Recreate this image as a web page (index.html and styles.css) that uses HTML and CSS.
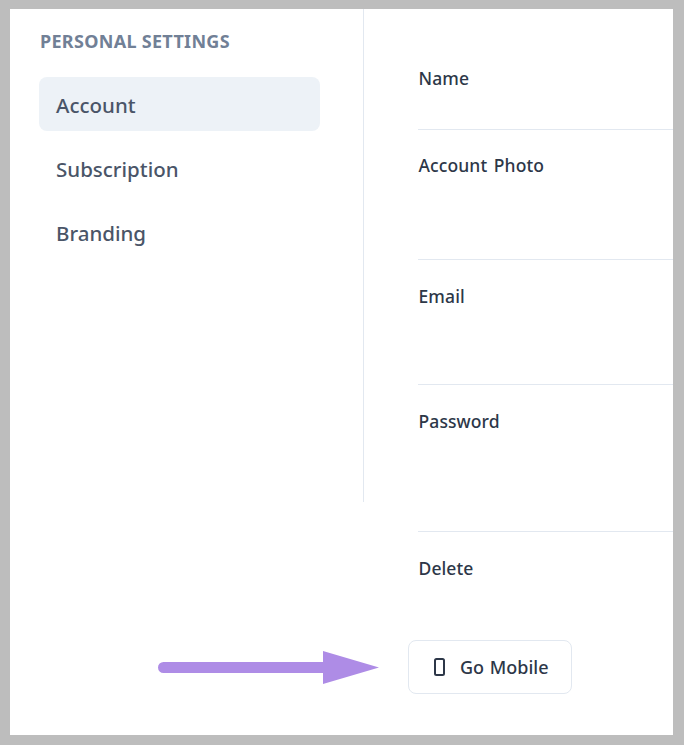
FILE: index.html
```html
<!DOCTYPE html>
<html lang="en">

<head>
    <meta charset="UTF-8"/>
    <meta content="width=device-width, initial-scale=1.0" name="viewport"/>
    <title>Personal settings</title>
    <link rel="stylesheet" href="styles.css">
</head>

<body>
    <div class="frame">
        <div class="settings">
            <!-- left menu -->
            <div class="sidebar">
                <h2 class="sidebar-title">PERSONAL SETTINGS</h2>
                <ul class="menu">
                    <li class="menu-item active">Account</li>
                    <li class="menu-item">Subscription</li>
                    <li class="menu-item">Branding</li>
                </ul>
            </div>
            <!-- form rows, the fields are cropped out of the shot -->
            <div class="rows">
                <div class="row row-name">Name</div>
                <div class="row row-photo">Account Photo</div>
                <div class="row row-email">Email</div>
                <div class="row row-password">Password</div>
                <div class="row row-delete">Delete</div>
            </div>
        </div>
        <div class="bottom">
            <svg class="arrow" width="221" height="33" viewBox="0 0 221 33">
                <path d="M5.500 11H165V0L221 16.500L165 33V22H5.500A5.500 5.500 0 0 1 5.500 11Z" fill="#ae8ce6"/>
            </svg>
            <button class="mobile-btn">
                <svg class="phone" width="11" height="18" viewBox="0 0 11 18">
                    <rect x="1" y="1" width="9" height="16" rx="1.500" fill="none" stroke="#2d3748" stroke-width="2"/>
                </svg>
                Go Mobile
            </button>
        </div>
    </div>
</body>

</html>
```

FILE: styles.css
```css
* {
    margin: 0;
    padding: 0;
    box-sizing: border-box;
}

ul {
    list-style: none;
}

body {
    background: #bdbdbd;
    padding: 9px 11px 10px 10px;
    font-family: "Noto Sans", "Open Sans", sans-serif;
}

.frame {
    width: 663px;
    height: 726px;
    background: #fff;
    overflow: hidden;
}

.settings {
    display: flex;
    align-items: flex-start;
    height: 622px;
}

.sidebar {
    width: 354px;
    height: 493px;
    padding: 21px 43px 0 29px;
    border-right: 1px solid #e2e8f0;
}

.sidebar-title {
    margin-left: 1px;
    font-size: 18px;
    font-weight: 700;
    line-height: 22px;
    letter-spacing: 0.300px;
    color: #718096;
}

.menu {
    margin-top: 25px;
}

.menu-item {
    height: 54px;
    line-height: 56px;
    padding-left: 17px;
    margin-bottom: 10px;
    font-size: 20.500px;
    font-weight: 500;
    color: #4a5568;
    border-radius: 8px;
}

.active {
    background: #edf2f7;
}

.rows {
    flex: 1;
    margin-left: 54px;
}

.row {
    padding-left: 0.500px;
    font-size: 17.500px;
    font-weight: 500;
    line-height: 24px;
    letter-spacing: 0.100px;
    word-spacing: 2px;
    color: #2d3748;
    border-bottom: 1px solid #e2e8f0;
}

.row-name {
    height: 121px;
    padding-top: 57px;
}

.row-photo {
    height: 130px;
    padding-top: 23px;
}

.row-email {
    height: 125px;
    padding-top: 24px;
}

.row-password {
    height: 147px;
    padding-top: 24px;
}

.row-delete {
    padding-top: 24px;
    border-bottom: none;
}

.bottom {
    display: flex;
    align-items: center;
    height: 54px;
    margin-top: 9px;
    padding-left: 148px;
}

.arrow {
    display: block;
}

.mobile-btn {
    display: flex;
    align-items: center;
    gap: 15px;
    width: 164px;
    height: 54px;
    margin-left: 29px;
    padding-left: 25px;
    background: #fff;
    border: 1px solid #e2e8f0;
    border-radius: 8px;
    font-family: inherit;
    font-size: 18px;
    font-weight: 500;
    word-spacing: 1px;
    color: #2d3748;
}
```
